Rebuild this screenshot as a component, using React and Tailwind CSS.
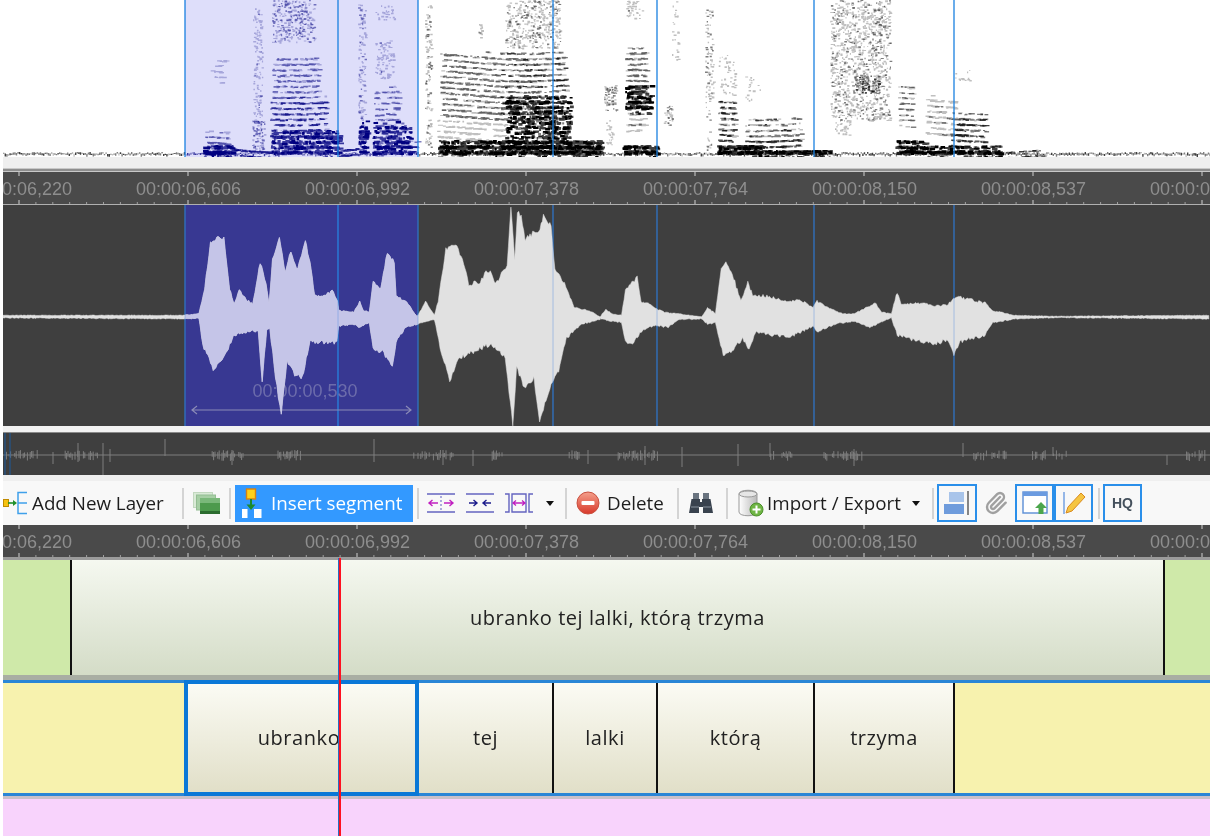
import React, { useMemo } from "react";
import { Paperclip } from "lucide-react";

const FONT = "[font-family:'Open_Sans',sans-serif]";
const SEGMENT_LINES = [185, 338, 418, 553, 657, 814, 954];

// small seeded generator so the drawings stay the same on every render
const makeRandom = (seed) => () => {
  seed = (seed + 0x6d2b79f5) | 0;
  let t = Math.imul(seed ^ (seed >>> 15), 1 | seed);
  t = (t + Math.imul(t ^ (t >>> 7), 61 | t)) ^ t;
  return ((t ^ (t >>> 14)) >>> 0) / 4294967296;
};

// [x0, x1, y0, y1, marks, strength, harmonic]
const SPECTRO_BLOBS = [
  [205, 228, 134, 146, 70, 0.55, 1], [203, 232, 145, 153, 150, 1, 1], [210, 226, 58, 82, 26, 0.25, 1],
  [253, 262, 8, 130, 130, 0.4, 0], [252, 264, 120, 150, 70, 0.7, 0], [272, 315, 0, 42, 300, 0.5, 0],
  [272, 318, 55, 96, 280, 0.6, 1], [270, 325, 95, 135, 340, 0.85, 1], [270, 340, 130, 153, 380, 1, 1],
  [232, 270, 146, 154, 90, 0.9, 1], [340, 358, 148, 154, 50, 0.9, 1], [358, 365, 0, 125, 110, 0.45, 0],
  [358, 366, 122, 152, 80, 1, 1], [375, 395, 5, 20, 30, 0.25, 0], [375, 393, 40, 78, 90, 0.4, 0],
  [374, 398, 90, 128, 100, 0.6, 1], [372, 410, 122, 153, 240, 1, 1], [400, 418, 145, 154, 50, 0.9, 1],
  [425, 431, 5, 150, 120, 0.5, 0], [440, 500, 52, 118, 600, 0.6, 1], [500, 565, 48, 118, 680, 0.7, 1],
  [505, 560, 0, 48, 380, 0.45, 0], [437, 510, 118, 140, 160, 0.3, 1], [505, 570, 95, 150, 600, 1, 1],
  [438, 600, 140, 153, 900, 1, 1], [570, 600, 145, 154, 90, 0.7, 1], [478, 482, 20, 38, 12, 0.5, 0],
  [604, 616, 85, 110, 70, 0.6, 0], [606, 612, 120, 145, 22, 0.3, 0], [625, 645, 50, 96, 170, 0.6, 1],
  [625, 650, 85, 108, 170, 1, 1], [626, 645, 108, 132, 70, 0.4, 1], [622, 656, 143, 153, 160, 1, 1],
  [626, 642, 0, 18, 35, 0.4, 0], [663, 672, 105, 125, 30, 0.5, 0], [672, 678, 0, 60, 26, 0.35, 0],
  [705, 713, 5, 150, 100, 0.5, 0], [718, 735, 55, 95, 50, 0.35, 0], [718, 735, 98, 142, 160, 0.7, 1],
  [717, 760, 143, 152, 210, 1, 1], [745, 800, 115, 135, 150, 0.65, 1], [745, 800, 135, 150, 170, 0.85, 1],
  [750, 830, 148, 154, 210, 1, 1], [745, 760, 75, 100, 20, 0.3, 0], [830, 890, 0, 120, 1000, 0.45, 0],
  [855, 880, 75, 92, 100, 0.8, 0], [835, 850, 120, 135, 35, 0.4, 0], [898, 912, 85, 125, 80, 0.55, 1],
  [895, 925, 140, 152, 140, 1, 1], [925, 955, 96, 135, 130, 0.4, 1], [950, 985, 110, 145, 210, 0.8, 1],
  [925, 1000, 146, 153, 240, 1, 1], [955, 970, 70, 80, 14, 0.3, 0], [1000, 1045, 150, 154, 60, 0.7, 1],
];

const Spectrogram = () => {
  const layers = useMemo(() => {
    const rand = makeRandom(7);
    const buckets = { navy: {}, black: {} };
    const add = (x, y, w, h, alpha) => {
      const level = Math.max(1, Math.min(4, Math.round(alpha * 4)));
      const group = x >= 185 && x < 418 ? buckets.navy : buckets.black;
      group[level] = (group[level] || "") + `M${x.toFixed(1)} ${y.toFixed(1)}h${w.toFixed(1)}v${h.toFixed(1)}h${(-w).toFixed(1)}z`;
    };
    SPECTRO_BLOBS.forEach(([x0, x1, y0, y1, count, strength, harmonic]) => {
      const heavy = strength === 1;
      for (let i = 0; i < count; i++) {
        const x = x0 + rand() * (x1 - x0);
        let y = y0 + rand() * (y1 - y0);
        // harmonics bend a little with the pitch, so they are not flat bars
        if (harmonic && !heavy) y = Math.round(y / 5.5) * 5.5 + Math.sin(x / 37) * 3 + rand() * 1.6;
        if (heavy) y = Math.round(y / 5) * 5 + rand() * 3;
        const w = harmonic ? 1.5 + rand() * 4 : 1 + rand() * 2;
        const h = heavy ? 1.5 + rand() * 1.5 : harmonic ? 1 + rand() * 0.8 : 1 + rand();
        const alpha = heavy ? 0.55 + rand() * 0.45 : strength * (0.2 + rand() * 0.8);
        add(x, y, w, h, alpha);
      }
    });
    // noise floor along the bottom edge
    for (let x = 3; x < 1210; x += 1.6) {
      add(x, 152 + rand() * 2, 1.4, 1 + rand() * 2, 0.35 + rand() * 0.4);
    }
    return buckets;
  }, []);

  return (
    <svg viewBox="3 0 1207 157" className="block h-[157px] w-full">
      <rect x="3" y="0" width="1207" height="157" fill="#ffffff" />
      <rect x="185" y="0" width="233" height="157" fill="#dedefa" />
      <g className="blur-[0.7px]">
        {[1, 2, 3, 4].map((level) => (
          <g key={level} opacity={level / 4}>
            <path d={layers.navy[level] || ""} fill="#000080" />
            <path d={layers.black[level] || ""} fill="#000000" />
          </g>
        ))}
      </g>
      {SEGMENT_LINES.map((x) => (
        <line key={x} x1={x} x2={x} y1="0" y2="157" stroke="#1a80e0" strokeWidth="1.3" />
      ))}
    </svg>
  );
};

// envelope points read off the reference, left part
const UPPER_LEFT = [[8,345],[480,345],[520,340],[535,260],[550,120],[570,105],[585,108],[600,260],[612,310],[625,260],[640,290],[660,310],[680,180],[695,240],[703,310],[712,175],[730,102],[745,215],[760,145],[775,205],[798,118],[810,180],[822,285],[850,285],[868,262],[882,300],[885,330],[925,335],[940,300],[950,330],[965,335],[975,235],[995,265],[1012,150],[1030,180],[1035,285],[1060,300],[1090,350],[1112,300],[1135,345],[1145,300],[1165,140],[1190,128],[1205,160],[1225,245],[1255,240],[1270,210],[1285,210],[1295,245],[1310,215],[1325,190],[1335,15],[1345,170],[1352,30],[1362,40],[1372,110],[1385,100],[1395,90],[1408,90],[1420,40],[1440,70],[1450,200],[1475,245],[1500,320],[1540,330],[1568,350]];
const LOWER_LEFT = [[8,355],[480,358],[520,355],[530,440],[557,515],[590,470],[610,410],[660,395],[675,400],[685,555],[697,390],[705,390],[720,540],[735,650],[750,490],[770,530],[790,540],[810,430],[880,435],[885,380],[925,375],[940,385],[965,370],[975,455],[1000,460],[1025,505],[1035,430],[1060,385],[1090,375],[1135,360],[1150,450],[1175,550],[1200,480],[1240,460],[1280,440],[1320,480],[1340,680],[1350,510],[1370,570],[1395,540],[1410,670],[1440,560],[1460,520],[1480,420],[1520,375],[1568,360]];
const UPPER_RIGHT = [[0,350],[15,325],[30,340],[55,345],[65,265],[95,225],[105,300],[120,305],[145,325],[165,335],[200,340],[260,350],[275,320],[295,340],[310,195],[325,180],[345,240],[360,300],[378,240],[390,280],[430,285],[480,300],[510,295],[545,320],[555,300],[590,325],[620,340],[650,340],[680,320],[703,305],[720,335],[745,340],[760,270],[770,310],[820,305],[860,315],[890,310],[910,285],[985,305],[1005,330],[1060,345],[1160,348],[1560,345]];
const LOWER_RIGHT = [[0,358],[30,365],[55,370],[65,430],[80,440],[105,400],[120,385],[145,380],[175,385],[200,360],[260,358],[275,375],[295,370],[315,475],[345,450],[365,420],[378,455],[400,400],[440,410],[490,415],[545,380],[555,400],[600,375],[650,365],[690,385],[745,355],[760,410],[800,425],[850,440],[890,425],[905,470],[920,430],[985,410],[1005,370],[1060,358],[1160,354],[1560,358]];

const toPage = (left, right) => [
  ...left.map(([x, y]) => [x / 2.613, 200 + y / 3]),
  ...right.map(([x, y]) => [600 + x / 2.557, 200 + y / 3]),
];

const sampleEnvelope = (points, rand, sign) => {
  const out = [];
  for (let i = 0; i < points.length - 1; i++) {
    const [x0, y0] = points[i];
    const [x1, y1] = points[i + 1];
    const steps = Math.max(1, Math.round((x1 - x0) / 1.3));
    for (let s = 0; s < steps; s++) {
      const t = s / steps;
      const y = y0 + (y1 - y0) * t;
      const depth = Math.abs(y - 316);
      const jitter = (0.5 + Math.min(4, depth / 8)) * rand() * sign;
      out.push(`${(x0 + (x1 - x0) * t).toFixed(1)},${(y + jitter).toFixed(1)}`);
    }
  }
  return out;
};

const Waveform = () => {
  const shape = useMemo(() => {
    const rand = makeRandom(21);
    const up = sampleEnvelope(toPage(UPPER_LEFT, UPPER_RIGHT), rand, 1);
    const low = sampleEnvelope(toPage(LOWER_LEFT, LOWER_RIGHT), rand, -1);
    return [...up, ...low.reverse()].join(" ");
  }, []);

  return (
    <svg viewBox="3 205 1207 221" className="block h-[221px] w-full">
      <defs>
        <clipPath id="sel-clip">
          <rect x="185" y="205" width="233" height="221" />
        </clipPath>
      </defs>
      <rect x="3" y="205" width="1207" height="221" fill="#3f3f3f" />
      <rect x="185" y="205" width="233" height="221" fill="#383892" />
      {SEGMENT_LINES.map((x) => (
        <line key={x} x1={x} x2={x} y1="205" y2="426" stroke={x === 338 ? "#0f78d8" : "#1c62ae"} strokeWidth="1.2" />
      ))}
      <text x="305" y="397" textAnchor="middle" fontSize="18" fill="#6c6cab" fontFamily="Liberation Sans, sans-serif">00:00:00,530</text>
      <path d="M192 410H411M197 406l-5 4 5 4M406 406l5 4-5 4" fill="none" stroke="#8a8ab6" strokeWidth="1.2" />
      <polygon points={shape} fill="#e1e1e1" stroke="#e1e1e1" strokeWidth="0.5" />
      <polygon points={shape} fill="#c5c5e8" stroke="#c5c5e8" strokeWidth="0.5" clipPath="url(#sel-clip)" />
      {SEGMENT_LINES.map((x) => (
        <line key={x} x1={x} x2={x} y1="205" y2="426" stroke="#5a90e0" strokeWidth="1" opacity="0.45" />
      ))}
    </svg>
  );
};

const MiniWave = () => {
  const path = useMemo(() => {
    const rand = makeRandom(99);
    let d = "M3 455H1210";
    for (let x = 5; x < 1205; x += 1.4) {
      const busy = Math.sin(x / 31) + Math.sin(x / 11) > 0.5;
      if (!busy || rand() < 0.35) continue;
      const up = 1 + rand() * 4;
      const down = 1 + rand() * 5;
      d += `M${x.toFixed(1)} ${(455 - up).toFixed(1)}V${(455 + down).toFixed(1)}`;
    }
    // the tall spikes
    [[103, 443, 475], [165, 439, 456], [78, 443, 462], [53, 452, 464], [110, 449, 462], [232, 450, 465], [287, 451, 459], [374, 439, 462], [443, 450, 465], [473, 450, 466], [588, 450, 464], [645, 446, 465], [682, 447, 467], [738, 444, 466], [770, 443, 457], [854, 449, 466], [963, 443, 457], [1053, 447, 456], [1167, 455, 465]].forEach(
      ([x, top, bottom]) => {
        d += `M${x} ${top}V${bottom}`;
      }
    );
    return d;
  }, []);

  return (
    <svg viewBox="3 433 1207 42" className="block h-[42px] w-full">
      <rect x="3" y="433" width="1207" height="42" fill="#3f3f3f" />
      <path d={path} stroke="#7f7f7f" strokeWidth="1" fill="none" />
      <line x1="5" x2="5" y1="433" y2="475" stroke="#1c5a9c" />
      <line x1="10" x2="10" y1="433" y2="475" stroke="#1c5a9c" />
    </svg>
  );
};

const RULER_LABELS = ["00:00:06,220", "00:00:06,606", "00:00:06,992", "00:00:07,378", "00:00:07,764", "00:00:08,150", "00:00:08,537", "00:00:08,923"];

const Ruler = () => {
  const ticks = [];
  for (let i = -2; i < 72; i++) {
    const x = 19 + i * 16.9;
    const major = i % 10 === 0;
    ticks.push(<line key={`b${i}`} x1={x} x2={x} y1={major ? 28 : 30} y2="32" stroke={major ? "#d0d0d0" : "#a0a0a0"} />);
    if (major) ticks.push(<line key={`t${i}`} x1={x} x2={x} y1="0" y2="4" stroke="#d0d0d0" />);
  }
  return (
    <div className="relative h-[32px] overflow-hidden bg-[#4a4a4a]">
      <div className="-ml-[68px] flex h-full w-max items-center pt-[2px]">
        {RULER_LABELS.map((label) => (
          <span key={label} className="w-[169px] text-center font-['Liberation_Sans'] text-[18px] text-[#8e8e8e]">
            {label}
          </span>
        ))}
      </div>
      <svg viewBox="3 0 1207 32" className="absolute inset-0 h-full w-full">
        {ticks}
      </svg>
    </div>
  );
};

const Separator = ({ className = "" }) => <div className={`h-[31px] w-[2px] shrink-0 bg-[#d4d4d4] ${className}`} />;

const Toggled = ({ className = "", children }) => (
  <div className={`flex h-[38px] shrink-0 items-center justify-center border-2 border-[#2a8fea] ${className}`}>{children}</div>
);

const AddLayerIcon = () => (
  <svg viewBox="0 0 25 24" className="h-[24px] w-[25px] shrink-0">
    <rect x="0.5" y="8.5" width="5" height="7" fill="#f5c211" stroke="#c08a00" />
    <path d="M5 12h6" stroke="#1f8f2a" strokeWidth="1.6" />
    <path d="M10 9l4 3-4 3z" fill="#1f8f2a" />
    <path d="M24 1.5h-9v21h9M15 12h9" fill="none" stroke="#3fa0ea" strokeWidth="1.5" />
  </svg>
);

const LayersIcon = () => (
  <svg viewBox="0 0 27 22" className="h-[22px] w-[27px] shrink-0">
    <rect x="0.5" y="0.5" width="19" height="15" fill="#d9ead6" stroke="#c2d8bf" />
    <rect x="3.5" y="3" width="19" height="15" fill="#a7cfa5" stroke="#94bd93" />
    <rect x="7" y="6" width="20" height="16" fill="#4d9a4d" />
    <rect x="7" y="6" width="20" height="5" fill="#7ab87a" />
    <rect x="7" y="19" width="20" height="3" fill="#2c6d30" />
  </svg>
);

const InsertIcon = () => (
  <svg viewBox="0 0 20 30" className="h-[30px] w-[20px] shrink-0">
    <rect x="4.5" y="1" width="9" height="10" fill="#ffd11a" stroke="#d9820f" strokeWidth="1.4" />
    <path d="M9 11v8" stroke="#1d8a2c" strokeWidth="2" />
    <path d="M4.5 16.5L9 22l4.5-5.5z" fill="#1d8a2c" />
    <rect x="0" y="21" width="5.5" height="9" fill="#ffffff" />
    <rect x="12" y="21" width="7.5" height="9" fill="#ffffff" />
  </svg>
);

const SpreadIcon = ({ inward }) => (
  <svg viewBox="0 0 28 20" className="h-[20px] w-[28px] shrink-0">
    <path d="M0 1h28M0 19h28" stroke="#6464c0" strokeWidth="1.4" />
    {inward ? (
      <g fill="none" stroke="#1c1c8c" strokeWidth="1.4">
        <path d="M3 10h8M7.5 7l3.5 3-3.5 3M25 10h-8M20.5 7L17 10l3.5 3" />
      </g>
    ) : (
      <g fill="none" stroke="#c020c0" strokeWidth="1.4">
        <path d="M11 10H2M5.5 7L2 10l3.5 3M17 10h9M22.5 7l3.5 3-3.5 3" />
        <path d="M14 3v14" stroke="#8a8ad0" strokeDasharray="2 2" />
      </g>
    )}
  </svg>
);

const FitIcon = () => (
  <svg viewBox="0 0 28 20" className="h-[20px] w-[28px] shrink-0">
    <path d="M0 1h4v18H0M7 1h14v18H7zM28 1h-4v18h4" fill="none" stroke="#6464c0" strokeWidth="1.4" />
    <path d="M8 10h12M11 7.5L8 10l3 2.5M17 7.5l3 2.5-3 2.5" fill="none" stroke="#c020c0" strokeWidth="1.3" />
  </svg>
);

const DeleteIcon = () => (
  <svg viewBox="0 0 24 24" className="h-[24px] w-[24px] shrink-0">
    <defs>
      <linearGradient id="del-grad" x1="0" y1="0" x2="0" y2="1">
        <stop offset="0" stopColor="#f4a08c" />
        <stop offset="1" stopColor="#d8382a" />
      </linearGradient>
    </defs>
    <circle cx="12" cy="12" r="11" fill="url(#del-grad)" stroke="#c9503f" />
    <rect x="5.5" y="10" width="13" height="4" rx="1" fill="#ffffff" />
  </svg>
);

const BinocularsIcon = () => (
  <svg viewBox="0 0 24 22" className="h-[22px] w-[24px] shrink-0">
    <path d="M4 1h6v6H4zM14 1h6v6h-6z" fill="#6a7480" />
    <path d="M2.5 7h8.5v3h2V7h8.5L24 21H14v-6h-4v6H0z" fill="#39424e" />
    <path d="M2 15h8M14 15h8" stroke="#8a939e" />
  </svg>
);

const DatabaseIcon = () => (
  <svg viewBox="0 0 26 28" className="h-[28px] w-[26px] shrink-0">
    <defs>
      <linearGradient id="db-grad" x1="0" y1="0" x2="1" y2="0">
        <stop offset="0" stopColor="#ffffff" />
        <stop offset="1" stopColor="#b8b8b8" />
      </linearGradient>
    </defs>
    <path d="M1 5c0-5 18-5 18 0v18c0 5-18 5-18 0z" fill="url(#db-grad)" stroke="#9a9a9a" />
    <ellipse cx="10" cy="5" rx="9" ry="3" fill="#e6e6e6" stroke="#9a9a9a" />
    <circle cx="18.5" cy="20.5" r="6.5" fill="#6fb544" stroke="#4a8f2a" />
    <path d="M18.5 16.5v8M14.5 20.5h8" stroke="#ffffff" strokeWidth="2" />
  </svg>
);

const Caret = () => <div className="h-0 w-0 shrink-0 border-x-[4.5px] border-t-[5px] border-x-transparent border-t-[#111]" />;

const Toolbar = () => (
  <div className={`flex h-[44px] items-center overflow-hidden bg-[#f8f8f8] ${FONT} text-[18.8px] text-[#1d1d1d]`}>
    <AddLayerIcon />
    <span className="ml-[4px] w-[135px] shrink-0 whitespace-nowrap">Add New Layer</span>
    <Separator className="ml-[15px]" />
    <div className="ml-[9px]"><LayersIcon /></div>
    <Separator className="ml-[9px]" />
    <div className="ml-[4px] flex h-[37px] w-[178px] shrink-0 items-center bg-[#3399ff] pl-[7px] text-white">
      <InsertIcon />
      <span className="ml-[9px] whitespace-nowrap">Insert segment</span>
    </div>
    <Separator className="ml-[4px]" />
    <div className="ml-[8px] flex items-center gap-[11px]">
      <SpreadIcon />
      <SpreadIcon inward />
      <FitIcon />
    </div>
    <div className="ml-[13px]"><Caret /></div>
    <Separator className="ml-[11px]" />
    <div className="ml-[9px]"><DeleteIcon /></div>
    <span className="ml-[7px] w-[56px] shrink-0">Delete</span>
    <Separator className="ml-[14px]" />
    <div className="ml-[10px]"><BinocularsIcon /></div>
    <Separator className="ml-[13px]" />
    <div className="ml-[10px]"><DatabaseIcon /></div>
    <span className="ml-[3px] w-[135px] shrink-0 whitespace-nowrap">Import / Export</span>
    <div className="ml-[10px]"><Caret /></div>
    <Separator className="ml-[12px]" />
    <Toggled className="ml-[3px] w-[40px]">
      <svg viewBox="0 0 26 26" className="h-[26px] w-[26px]">
        <rect x="5" y="2" width="15" height="10" fill="#a8c4ea" />
        <rect x="0" y="14" width="20" height="10" fill="#6f9cdc" />
        <path d="M24 1v24" stroke="#555" strokeWidth="1.4" />
      </svg>
    </Toggled>
    <div className="flex w-[38px] shrink-0 justify-center">
      <Paperclip size={24} color="#a0a0a0" strokeWidth={2.4} />
    </div>
    <Toggled className="w-[39px]">
      <svg viewBox="0 0 26 26" className="h-[26px] w-[26px]">
        <rect x="1" y="2" width="24" height="21" fill="#ffffff" stroke="#5b8ed6" strokeWidth="1.4" />
        <rect x="1" y="2" width="24" height="4" fill="#6b9be0" />
        <path d="M19 12l6 6h-3.5v6h-5v-6H13z" fill="#4ca64c" />
      </svg>
    </Toggled>
    <Toggled className="w-[39px]">
      <svg viewBox="0 0 26 26" className="h-[26px] w-[26px]">
        <path d="M3 2v22" stroke="#6b9be0" strokeWidth="1.4" />
        <path d="M20 3l4 4L11 21l-6 2 2-6z" fill="#f5c542" stroke="#d98a1f" />
      </svg>
    </Toggled>
    <Separator className="ml-[5px]" />
    <Toggled className="ml-[3px] w-[39px] font-['Liberation_Sans'] text-[14px] font-bold text-[#44505c]">HQ</Toggled>
  </div>
);

const Divider = () => <div className="w-[2px] shrink-0 bg-[#111]" />;

const WORDS = [
  { text: "tej", width: "w-[133px]" },
  { text: "lalki", width: "w-[102px]" },
  { text: "którą", width: "w-[155px]" },
  { text: "trzyma", width: "w-[138px]" },
];

const Tiers = () => (
  <div className={`${FONT} text-[20px] tracking-[0.55px] text-[#222]`}>
    <div className="flex h-[115px]">
      <div className="w-[67px] shrink-0 bg-[#cfe9a9]" />
      <Divider />
      <div className="flex w-[1091px] shrink-0 items-center justify-center bg-gradient-to-b from-[#f5f8f0] to-[#d4dcc7] pt-[1px]">
        ubranko tej lalki, którą trzyma
      </div>
      <Divider />
      <div className="flex-1 bg-[#cfe9a9]" />
    </div>
    <div className="h-[5px] bg-[#a9aea3]" />
    <div className="flex h-[116px] border-y-[3px] border-[#2a86d6] bg-[#f7f2ae]">
      <div className="w-[181px] shrink-0" />
      <div className="-my-[3px] flex w-[235px] shrink-0 items-center justify-center border-[4px] border-[#0a78d7] bg-gradient-to-b from-[#fbfbf4] to-[#e1dfc8]">
        <span className="-ml-[5px]">ubranko</span>
      </div>
      {WORDS.map((word) => (
        <React.Fragment key={word.text}>
          <div className={`flex ${word.width} shrink-0 items-center justify-center bg-gradient-to-b from-[#fbfbf4] to-[#e1dfc8]`}>
            {word.text}
          </div>
          <Divider />
        </React.Fragment>
      ))}
    </div>
    <div className="h-[3px] bg-[#c9c0c9]" />
    <div className="h-[38px] bg-[#f8d3fc]" />
  </div>
);

const App = () => (
  <div className="relative h-[836px] w-[1210px] overflow-hidden bg-white pl-[3px] blur-[0.4px]">
    <Spectrogram />
    <div className="h-[11px] bg-[#efefef]" />
    <div className="h-[4px] border-y border-[#c8c8c8] bg-[#8e8e8e]" />
    <Ruler />
    <div className="h-[1px] bg-[#b0b0b0]" />
    <Waveform />
    <div className="h-[7px] border-b border-[#8a8a8a] bg-[#f2f2f2]" />
    <MiniWave />
    <div className="h-[6px] bg-[#efefef]" />
    <Toolbar />
    <Ruler />
    <div className="h-[3px] bg-[#9b9b9b]" />
    <Tiers />
    {/* play cursor over the tiers */}
    <div className="absolute bottom-0 left-[338px] top-[558px] w-[3px] border-l border-[#2a6fc0] bg-[#ff1020]" />
  </div>
);

export default App;
